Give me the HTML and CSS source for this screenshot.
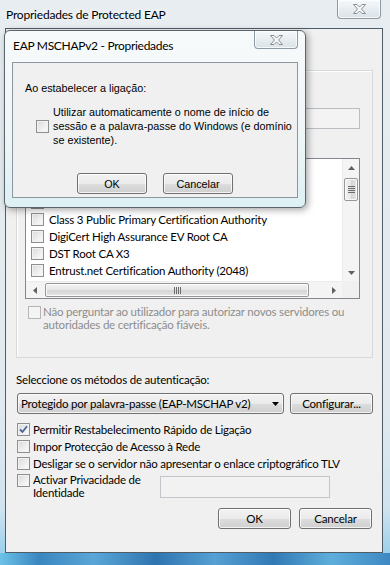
FILE: index.html
```html
<!DOCTYPE html>
<html lang="pt">
<head>
    <meta charset="UTF-8">
    <title>Propriedades de Protected EAP</title>
    <link rel="stylesheet" href="styles.css">
</head>
<body>
    <div class="window">
        <div class="titlebar">
            <span class="title">Propriedades de Protected EAP</span>
            <span class="close-btn">
                <svg width="13" height="10" viewBox="0 0 13 10"><polygon points="0.5,0.5 4,0.5 6.5,3 9,0.5 12.5,0.5 8.5,5 12.5,9.5 9,9.5 6.5,7 4,9.5 0.5,9.5 4.5,5" fill="#f4f6f8" stroke="#8a8f94"/></svg>
            </span>
        </div>

        <div class="client">
            <div class="group">
                <!-- these controls sit under the child dialog -->
                <div class="check"><span class="box"></span></div>
                <div class="check"><span class="box"></span></div>
                <div class="textbox servers"></div>
                <div class="group-label"></div>

                <div class="listbox">
                    <ul class="list-items">
                        <li><span class="box"></span></li>
                        <li><span class="box"></span></li>
                        <li><span class="box"></span></li>
                        <li><span class="box"></span>Class 3 Public Primary Certification Authority</li>
                        <li><span class="box"></span>DigiCert High Assurance EV Root CA</li>
                        <li><span class="box"></span>DST Root CA X3</li>
                        <li><span class="box"></span>Entrust.net Certification Authority (2048)</li>
                    </ul>
                    <div class="vscroll">
                        <span class="sb-btn"><svg width="7" height="4" viewBox="0 0 7 4"><polygon points="3.5,0 7,4 0,4" fill="#606060"/></svg></span>
                        <span class="vthumb">
                            <svg width="7" height="7" viewBox="0 0 7 7"><path d="M0 0.5h7M0 2.5h7M0 4.5h7M0 6.5h7" stroke="#6b6b6b"/></svg>
                        </span>
                        <span class="sb-space"></span>
                        <span class="sb-btn"><svg width="7" height="4" viewBox="0 0 7 4"><polygon points="0,0 7,0 3.5,4" fill="#606060"/></svg></span>
                    </div>
                    <div class="hscroll">
                        <span class="sb-btn"><svg width="4" height="7" viewBox="0 0 4 7"><polygon points="4,0 4,7 0,3.5" fill="#606060"/></svg></span>
                        <span class="hthumb">
                            <svg width="7" height="7" viewBox="0 0 7 7"><path d="M0.5 0v7M2.5 0v7M4.5 0v7M6.5 0v7" stroke="#6b6b6b"/></svg>
                        </span>
                        <span class="sb-space"></span>
                        <span class="sb-btn"><svg width="4" height="7" viewBox="0 0 4 7"><polygon points="0,0 4,3.5 0,7" fill="#606060"/></svg></span>
                    </div>
                    <div class="corner"></div>
                </div>

                <label class="check multi disabled">
                    <span class="box"></span>
                    <span>Não perguntar ao utilizador para autorizar novos servidores ou<br>autoridades de certificação fiáveis.</span>
                </label>
            </div>

            <div class="section-label">Seleccione os métodos de autenticação:</div>
            <div class="method-row">
                <div class="btn combo">
                    <span>Protegido por palavra-passe (EAP-MSCHAP v2)</span>
                    <svg width="7" height="4" viewBox="0 0 7 4"><polygon points="0,0 7,0 3.5,4" fill="#000"/></svg>
                </div>
                <button class="btn configure">Configurar...</button>
            </div>

            <div class="options">
                <label class="check">
                    <span class="box checked"><svg width="9" height="9" viewBox="0 0 9 9"><path d="M1 4.5L3.5 7L8 1.2" fill="none" stroke="#4b6597" stroke-width="1.8"/></svg></span>
                    Permitir Restabelecimento Rápido de Ligação
                </label>
                <label class="check"><span class="box"></span>Impor Protecção de Acesso à Rede</label>
                <label class="check"><span class="box"></span>Desligar se o servidor não apresentar o enlace criptográfico TLV</label>
                <div class="privacy-row">
                    <label class="check multi">
                        <span class="box"></span>
                        <span>Activar Privacidade de<br>Identidade</span>
                    </label>
                    <div class="textbox identity"></div>
                </div>
            </div>

            <div class="dialog-buttons">
                <button class="btn">OK</button>
                <button class="btn">Cancelar</button>
            </div>
        </div>

        <!-- MSCHAPv2 child dialog on top -->
        <div class="popup">
            <div class="popup-titlebar">
                <span class="title">EAP MSCHAPv2 - Propriedades</span>
                <span class="close-btn small">
                    <svg width="13" height="10" viewBox="0 0 13 10"><polygon points="0.5,0.5 4,0.5 6.5,3 9,0.5 12.5,0.5 8.5,5 12.5,9.5 9,9.5 6.5,7 4,9.5 0.5,9.5 4.5,5" fill="#f4f6f8" stroke="#8a8f94"/></svg>
                </span>
            </div>
            <div class="popup-client">
                <p class="popup-label">Ao estabelecer a ligação:</p>
                <label class="popup-check">
                    <span class="box"></span>
                    <span>Utilizar automaticamente o nome de início de<br>sessão e a palavra-passe do Windows (e domínio<br>se existente).</span>
                </label>
                <div class="popup-buttons">
                    <button class="btn">OK</button>
                    <button class="btn">Cancelar</button>
                </div>
            </div>
        </div>
    </div>
</body>
</html>
```

FILE: styles.css
```css
/* Basic reset */
* {
    margin: 0;
    padding: 0;
    box-sizing: border-box;
}

body {
    width: 390px;
    height: 565px;
    overflow: hidden;
    font-family: Lato, 'Liberation Sans', sans-serif;
    font-size: 11.5px;
    letter-spacing: -0.2px;
    color: #000;
}

/* Outer aero window */
.window {
    position: relative;
    width: 390px;
    height: 565px;
    display: flex;
    flex-direction: column;
    background:
        linear-gradient(90deg, #6cc2e8 0%, #3a86c0 10%, #5aa6d8 24%, #2f74b0 40%, #56a0d4 55%, #3179b5 70%, #5eaedb 85%, #3d88c3 100%) bottom / 100% 12px no-repeat,
        linear-gradient(180deg, #e7edf1 0%, #e2eaef 70%, #cfe3ef 90%, #8fcbe9 100%);
}

.titlebar {
    height: 28px;
    display: flex;
    justify-content: space-between;
    align-items: flex-start;
    padding: 0 9px 0 6px;
}

.title {
    font-size: 12px;
    line-height: 29px;
    text-shadow: 0 0 6px #fff, 0 0 10px #fff;
}

.close-btn {
    width: 44px;
    height: 19px;
    display: flex;
    align-items: center;
    justify-content: center;
    border: 1px solid #8d99a3;
    border-top: none;
    border-radius: 0 0 4px 4px;
    background: linear-gradient(#f6f9fa, #e7edf1 50%, #dbe3e9);
    box-shadow: inset 0 0 0 1px rgba(255, 255, 255, 0.7);
}

.close-btn.small {
    height: 18px;
}

/* Client area */
.client {
    flex: 1;
    margin: 0 7px 12px 5px;
    border: 1px solid #4f5d68;
    background-color: #f0f0f0;
    padding: 0 9px 0 10px;
}

/* Checkboxes */
.box {
    flex: none;
    width: 13px;
    height: 13px;
    display: flex;
    align-items: center;
    justify-content: center;
    border: 1px solid #8e8f8f;
    background: linear-gradient(135deg, #d8d9db, #f3f3f3 70%, #fbfbfb);
    box-shadow: inset 0 0 0 1px #f2f2f2;
}

.check {
    height: 17px;
    display: flex;
    align-items: center;
    gap: 3px;
    white-space: nowrap;
}

.check.multi {
    height: auto;
    align-items: flex-start;
    line-height: 13px;
}

.check.multi .box {
    margin-top: 1px;
}

.check.disabled {
    color: #8d8d8d;
}

.check.disabled .box {
    border-color: #b5b5b5;
    background: #f4f4f4;
    box-shadow: none;
}

/* Group box (mostly under the child dialog) */
.group {
    margin-top: 41px;
    height: 288px;
    border: 1px solid #d5d9dc;
    box-shadow: inset 1px 1px #fff;
    padding: 4px 12px 0 8px;
}

.group .check {
    height: 16px;
    margin-left: 3px;
}

.textbox {
    height: 21px;
    border: 1px solid #b9bdc1;
    background-color: #f3f3f3;
}

.servers {
    margin: 1px 0 0 11px;
}

.group-label {
    height: 15px;
    margin: 8px 0 6px 3px;
}

/* Certificate list */
.listbox {
    height: 141px;
    border: 1px solid #828790;
    background-color: #fff;
    display: grid;
    grid-template-columns: 1fr 17px;
    grid-template-rows: 1fr 17px;
}

.list-items {
    list-style-type: none;
    padding: 1px 0 0 5px;
    overflow: hidden;
}

.list-items li {
    height: 17px;
    display: flex;
    align-items: center;
    gap: 5px;
    white-space: nowrap;
}

.vscroll,
.hscroll {
    display: flex;
    background: #f4f4f4;
}

.vscroll {
    flex-direction: column;
    border-left: 1px solid #ececec;
}

.hscroll {
    border-top: 1px solid #ececec;
}

.sb-btn {
    flex: none;
    width: 17px;
    height: 17px;
    display: flex;
    align-items: center;
    justify-content: center;
}

.vscroll .sb-btn {
    width: 16px;
}

.hscroll .sb-btn {
    height: 16px;
}

.sb-space {
    flex: 1;
}

.vthumb,
.hthumb {
    display: flex;
    align-items: center;
    justify-content: center;
    border: 1px solid #979797;
    border-radius: 2px;
    box-shadow: inset 0 0 0 1px rgba(255, 255, 255, 0.8);
}

.vthumb {
    height: 23px;
    margin: 2px 1px 0;
    background: linear-gradient(90deg, #f2f2f2, #e6e6e6 50%, #d6d6d6 51%, #e4e4e4);
}

.hthumb {
    width: 264px;
    margin: 1px 0 1px 2px;
    background: linear-gradient(#f2f2f2, #e6e6e6 50%, #d6d6d6 51%, #e4e4e4);
}

.corner {
    background-color: #f0f0f0;
}

.group .check.multi {
    height: auto;
    margin: 6px 0 0 3px;
    gap: 2px;
}

/* Authentication method */
.section-label {
    line-height: 15px;
    margin-top: 14px;
}

.method-row {
    display: flex;
    gap: 6px;
    margin: 6px 0 0 1px;
}

.btn {
    height: 21px;
    display: flex;
    align-items: center;
    justify-content: center;
    border: 1px solid #707070;
    border-radius: 3px;
    background: linear-gradient(#f2f2f2 0%, #ebebeb 50%, #dddddd 51%, #cfcfcf 100%);
    box-shadow: inset 0 0 0 1px rgba(255, 255, 255, 0.75);
    font: inherit;
    letter-spacing: inherit;
    color: #000;
}

.combo {
    width: 267px;
    justify-content: space-between;
    padding: 0 4px 0 3px;
}

.configure {
    width: 83px;
}

.options {
    margin: 7px 0 0 1px;
}

.privacy-row {
    display: flex;
    align-items: flex-start;
}

.privacy-row .check.multi {
    width: 143px;
    margin-top: 1px;
}

.identity {
    width: 170px;
    height: 22px;
    margin-top: 4px;
    border-color: #c2c6ca;
    background-color: #f2f2f2;
}

.dialog-buttons {
    display: flex;
    justify-content: flex-end;
    gap: 8px;
    margin: 9px 1px 0 0;
}

.dialog-buttons .btn {
    width: 73px;
}

/* Child dialog */
.popup {
    position: absolute;
    left: 4px;
    top: 30px;
    width: 302px;
    height: 178px;
    display: flex;
    flex-direction: column;
    padding: 0 7px 9px;
    border: 1px solid #5b646c;
    border-radius: 6px;
    background: linear-gradient(180deg, #f7fafb 0%, #eff6f8 60%, #dcf0f3 100%);
    box-shadow: 2px 2px 7px rgba(0, 0, 0, 0.35);
}

.popup-titlebar {
    height: 31px;
    display: flex;
    justify-content: space-between;
    align-items: flex-start;
    padding-left: 1px;
}

.popup-titlebar .title {
    font-size: 12px;
    letter-spacing: -0.3px;
    line-height: 29px;
}

.popup-client {
    flex: 1;
    border: 1px solid #8c969e;
    background-color: #f0f0f0;
    padding: 18px 0 0 12px;
    font-family: 'Liberation Sans', Arial, sans-serif;
    font-size: 10.8px;
    letter-spacing: 0;
}

.popup-label {
    line-height: 14px;
}

.popup-check {
    display: flex;
    align-items: center;
    gap: 4px;
    margin: 10px 0 0 11px;
    line-height: 14px;
    white-space: nowrap;
}

.popup-buttons {
    display: flex;
    justify-content: center;
    gap: 16px;
    margin: 26px 12px 0 0;
}

.popup-buttons .btn {
    width: 70px;
}
```
